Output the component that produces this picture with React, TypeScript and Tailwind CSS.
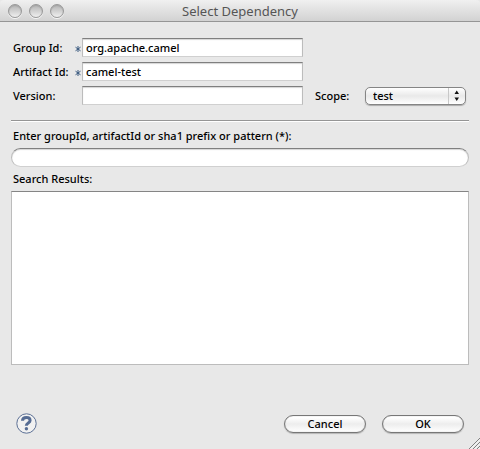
import type { InputHTMLAttributes } from "react";

const fieldBorder =
  "border border-x-[#bcbcbc] border-t-[#7f7f7f] border-b-[#d0d0d0] bg-white shadow-[inset_0_1px_1px_#d5d5d5] outline-none";

function Field({ id, label, required, ...rest }: { id: string; label: string; required?: boolean } & InputHTMLAttributes<HTMLInputElement>) {
  return (
    <>
      <label htmlFor={id} className="whitespace-nowrap">
        {label}
      </label>
      <span className="flex justify-center">
        {required && (
          <svg width="6" height="6" viewBox="0 0 6 6" className="mt-0.5" stroke="#39597f" strokeWidth="1" aria-hidden="true">
            <path d="M3 0v6M.5 1.200l5 3.600M5.500 1.200l-5 3.600" />
          </svg>
        )}
      </span>
      <input id={id} type="text" required={required} className={`h-[19px] w-full min-w-0 px-[3px] ${fieldBorder}`} {...rest} />
    </>
  );
}

function TrafficLight({ label }: { label: string }) {
  return (
    <button
      type="button"
      aria-label={label}
      className="size-3.5 rounded-full border border-[#999] bg-linear-to-b from-[#b5b5b5] via-[#d1d1d1] to-[#f0f0f0] shadow-[0_1px_0_#f4f4f4,inset_0_1px_1px_#a5a5a5]"
    />
  );
}

function PushButton({ children }: { children: string }) {
  return (
    <button
      type="button"
      className="h-[18px] w-[82px] rounded-full border border-[#777] bg-linear-to-b from-white from-10% via-[#ededed] via-50% to-white text-center leading-4 shadow-[0_1px_1px_#b5b5b5,inset_0_0_1px_#999]"
    >
      {children}
    </button>
  );
}

export default function App() {
  return (
    <div className="flex min-h-screen flex-col bg-[#e8e8e8] font-['Noto_Sans',sans-serif] text-[11px] leading-4 font-medium text-black">
      <header className="grid h-[22px] grid-cols-[1fr_auto_1fr] items-center rounded-t border-b border-[#959595] bg-linear-to-b from-[#f0f0f0] to-[#d2d2d2] px-2">
        <div className="flex gap-[7px]">
          <TrafficLight label="Close" />
          <TrafficLight label="Minimize" />
          <TrafficLight label="Zoom" />
        </div>
        <h1 className="text-[13px] font-normal text-[#555]">Select Dependency</h1>
      </header>

      <main className="flex flex-1 flex-col px-[11px] pt-4">
        <form className="grid grid-cols-[61px_8px_minmax(0,1fr)_62px_104px] items-center gap-y-[5px] pl-0.5">
          <Field id="group" label="Group Id:" required defaultValue="org.apache.camel" />
          <span className="col-span-2" />
          <Field id="artifact" label="Artifact Id:" required defaultValue="camel-test" />
          <span className="col-span-2" />
          <Field id="version" label="Version:" />
          <label htmlFor="scope" className="pl-3">
            Scope:
          </label>
          <div className="relative mr-[3px]">
            <select
              id="scope"
              defaultValue="test"
              className="block h-[18px] w-full appearance-none rounded-[5px] border border-[#858585] bg-linear-to-b from-white via-[#e9e9e9] via-50% to-white pl-[7px] shadow-[0_1px_1px_#aaa] outline-none"
            >
              <option>compile</option>
              <option>provided</option>
              <option>runtime</option>
              <option>test</option>
            </select>
            <svg className="pointer-events-none absolute inset-y-0 right-0 h-[18px] w-[18px]" viewBox="0 0 18 18" aria-hidden="true">
              <path d="M.5 1v16" stroke="#c8c8c8" />
              <path d="M6.500 7h4.500L8.750 3.500zM6.500 10.500h4.500L8.750 14z" fill="#111" />
            </svg>
          </div>
        </form>

        <hr className="mt-[15px] h-0.5 border-t border-b border-t-[#959595] border-b-white" />

        <label htmlFor="query" className="mt-[6px] pl-0.5">
          Enter groupId, artifactId or sha1 prefix or pattern (*):
        </label>
        <input id="query" type="search" className={`mt-1 h-[19px] w-full rounded-full px-2 ${fieldBorder}`} />

        <h2 id="results" className="mt-1 pl-0.5 font-medium">
          Search Results:
        </h2>
        <div
          role="listbox"
          aria-labelledby="results"
          className="mt-1 min-h-20 flex-1 border border-[#bcbcbc] border-t-[#858585] bg-white"
        />
      </main>

      <footer className="relative flex items-center gap-4 pt-12 pr-4 pb-[15px] pl-4">
        <button type="button" aria-label="Help" className="mr-auto">
          <svg width="21" height="21" viewBox="0 0 21 21" fill="none" className="block" aria-hidden="true">
            <circle cx="10.500" cy="10.500" r="9.700" fill="#f1f1f1" stroke="#5c7095" />
            <path d="M6.500 7.800c0-2.300 1.500-3.200 3.900-3.200s3.700 1.100 3.700 2.900c0 2.500-3.800 2.400-3.800 5.200" stroke="#566c93" strokeWidth="3" />
            <circle cx="10.400" cy="15.700" r="1.700" fill="#566c93" />
          </svg>
        </button>
        <PushButton>Cancel</PushButton>
        <PushButton>OK</PushButton>
        <svg className="absolute right-0 bottom-0" width="12" height="12" viewBox="0 0 12 12" stroke="#808080" aria-hidden="true">
          <path d="M1 12L12 1M5 12l7-7M9 12l3-3" />
          <path d="M2.500 12L12 2.500M6.500 12L12 6.500M10.500 12L12 10.500" stroke="#fff" strokeWidth=".7" />
        </svg>
      </footer>
    </div>
  );
}
